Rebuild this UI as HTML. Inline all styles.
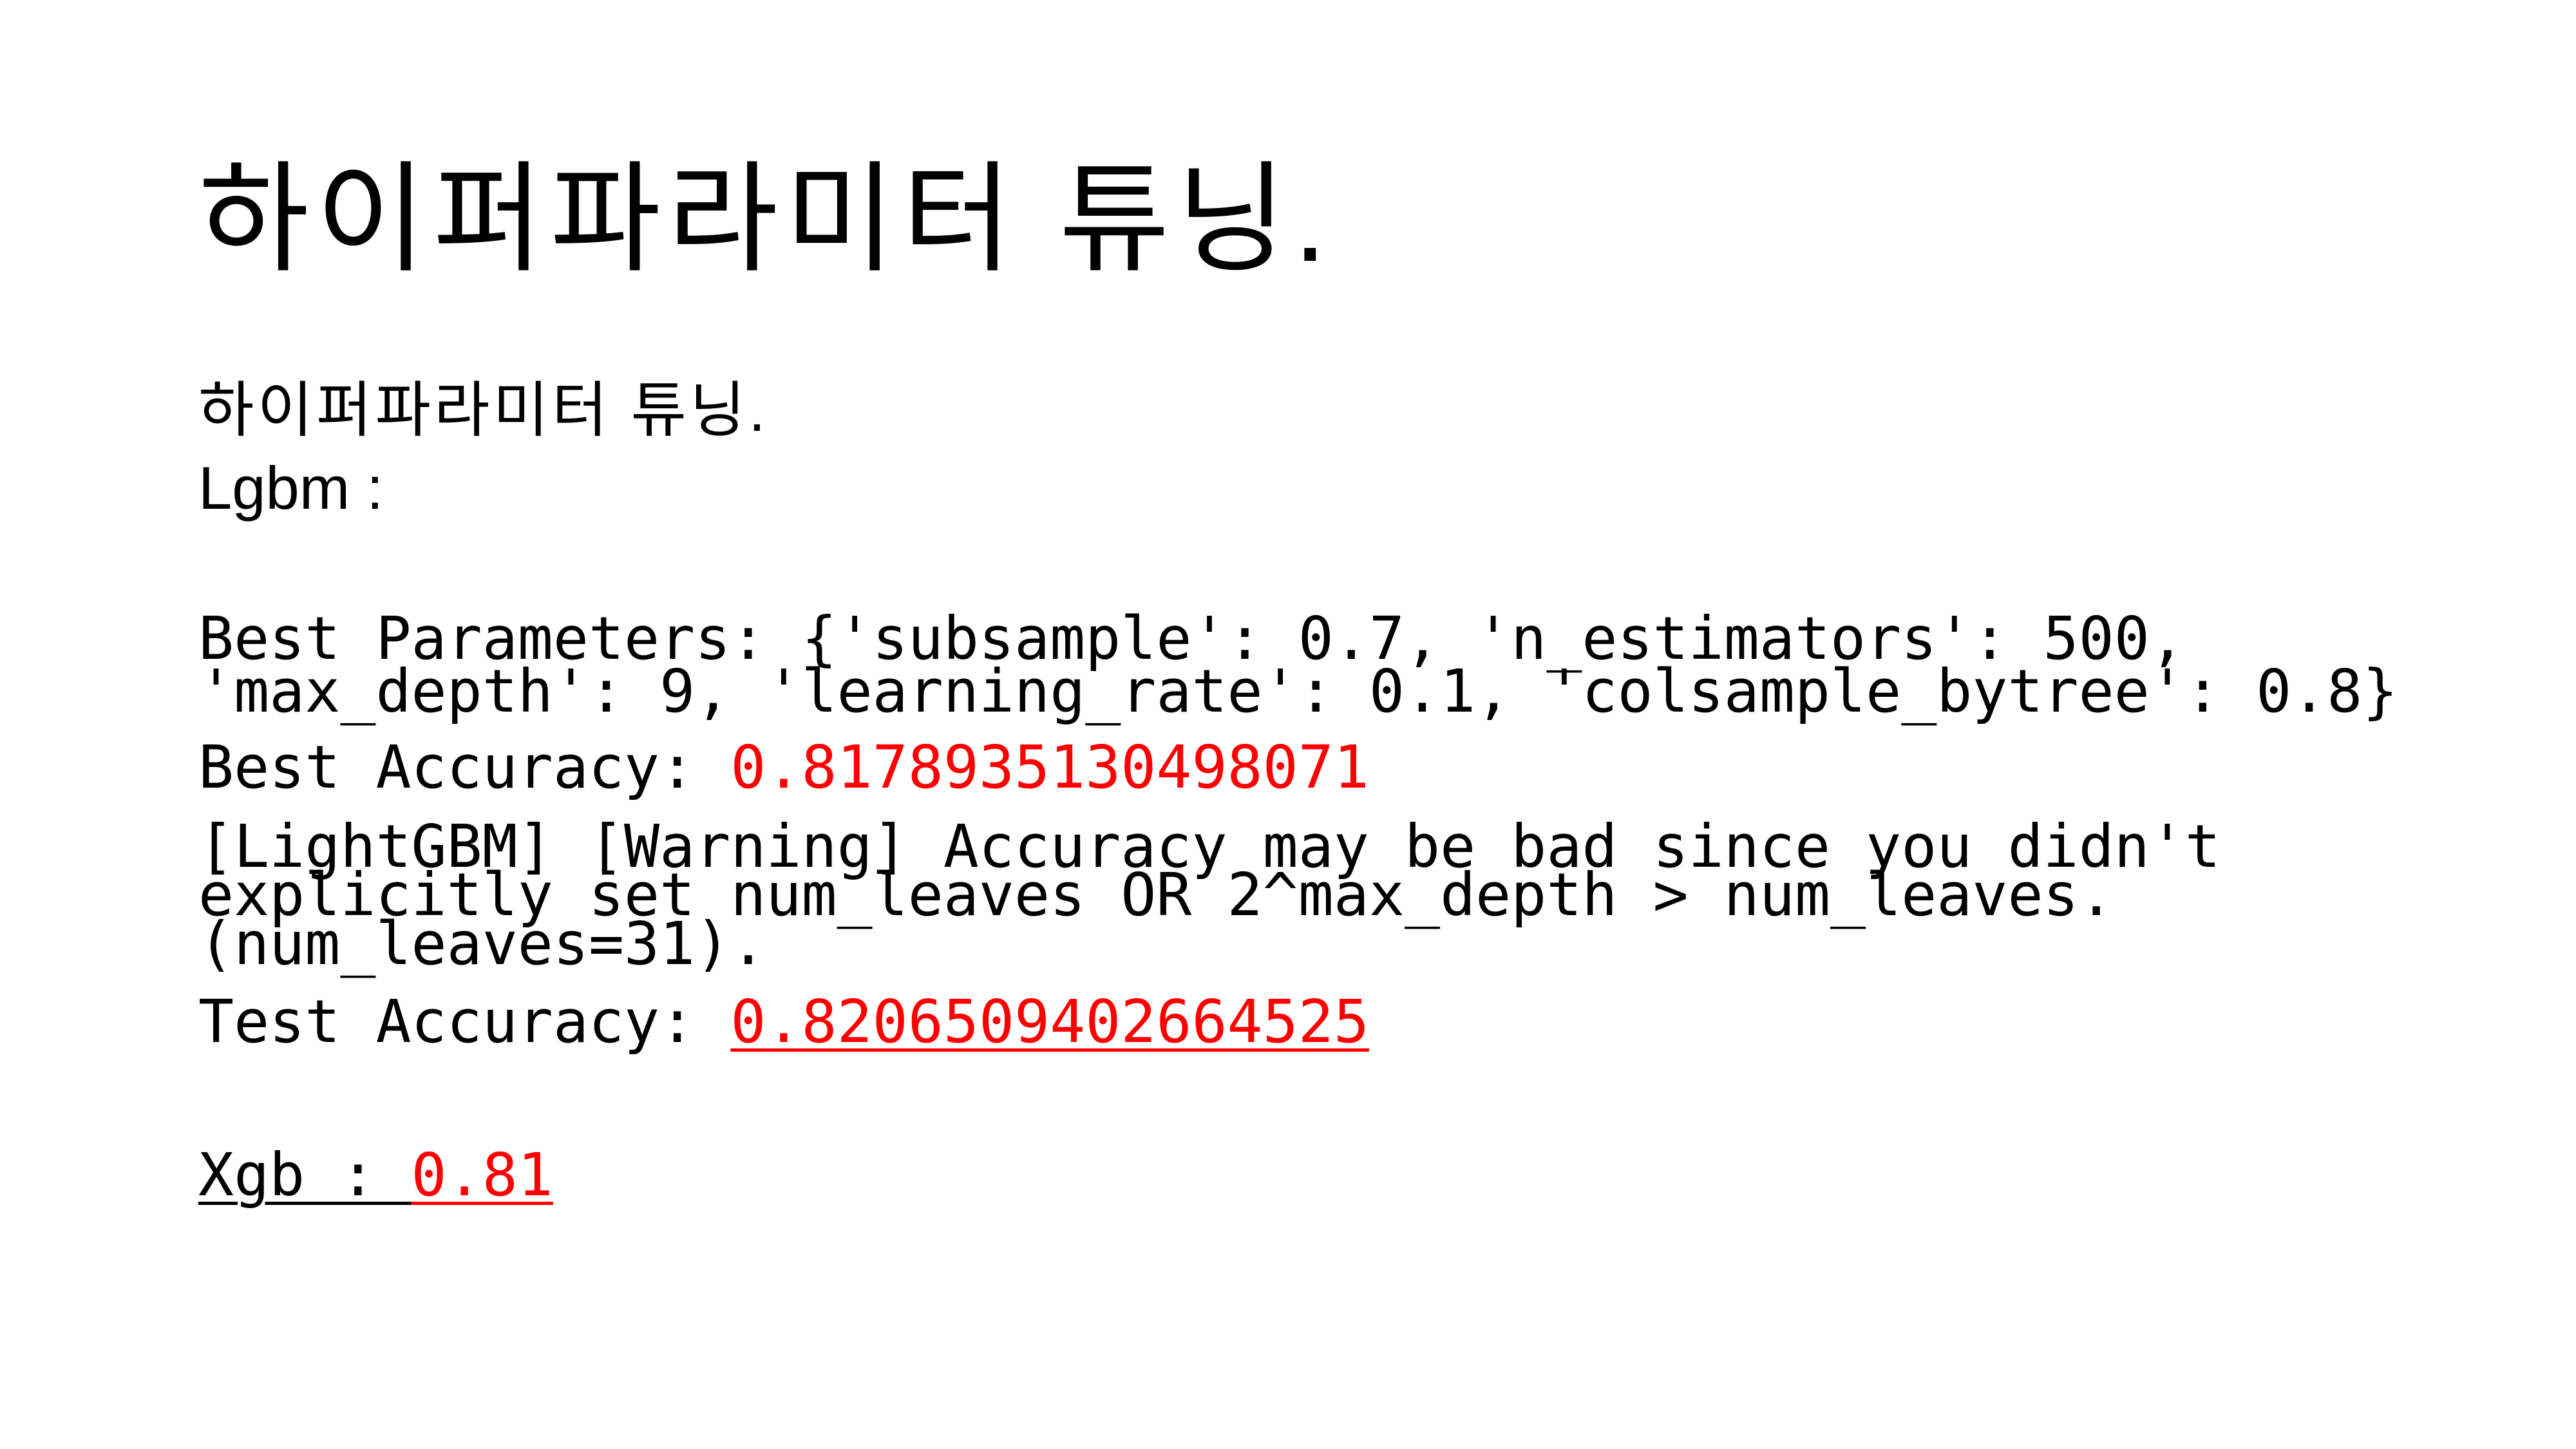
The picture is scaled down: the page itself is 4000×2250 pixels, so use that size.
<!DOCTYPE html>
<html><head><meta charset="utf-8">
<style>
html,body{margin:0;padding:0;background:#fff;}
body{width:4000px;height:2250px;position:relative;overflow:hidden;color:#000;}
.k{position:absolute;left:308px;line-height:1;white-space:pre;font-family:"Liberation Sans","Noto Sans CJK KR",sans-serif;}
.m{position:absolute;left:308px;line-height:1;white-space:pre;font-family:"DejaVu Sans Mono","Liberation Mono",monospace;font-size:91.5px;}
.r{color:#ff0000;}
.u{text-decoration:underline;text-decoration-thickness:5px;text-underline-offset:10px;}
</style></head><body>
<div class="k" style="top:247px;font-size:187px;letter-spacing:10px;">하이퍼파라미터 튜닝.</div>
<div class="k" style="top:590px;font-size:94px;letter-spacing:5px;">하이퍼파라미터 튜닝.</div>
<div class="k" style="top:711px;font-size:94px;">Lgbm :</div>
<div class="m" style="top:946px;">Best Parameters: {'subsample': 0.7, 'n_estimators': 500,</div>
<div class="m" style="top:1028px;">'max_depth': 9, 'learning_rate': 0.1, 'colsample_bytree': 0.8}</div>
<div class="m" style="top:1146px;">Best Accuracy: <span class="r">0.8178935130498071</span></div>
<div class="m" style="top:1269px;">[LightGBM] [Warning] Accuracy may be bad since you didn't</div>
<div class="m" style="top:1344px;">explicitly set num_leaves OR 2^max_depth &gt; num_leaves.</div>
<div class="m" style="top:1420px;">(num_leaves=31).</div>
<div class="m" style="top:1541px;">Test Accuracy: <span class="r u">0.8206509402664525</span></div>
<div class="m" style="top:1779px;"><span class="u">Xgb : </span><span class="r u">0.81</span></div>
</body></html>
